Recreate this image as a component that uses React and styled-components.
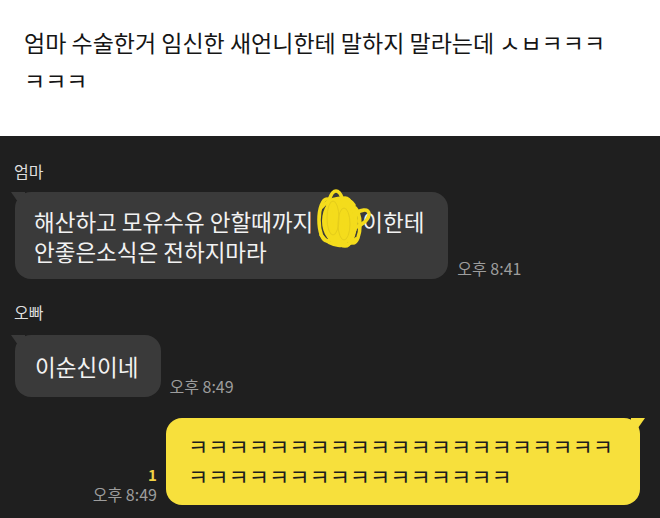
import styled, { createGlobalStyle } from "styled-components";

const GlobalStyle = createGlobalStyle`
    html, body {
        margin: 0;
        padding: 0;
        background: #1f1f1f;
    }
    body {
        font-family: "Noto Sans CJK KR", "Noto Sans", sans-serif;
        width: 660px;
        height: 518px;
        overflow: hidden;
    }
`;

const Page = styled.div`
    display: flex;
    flex-direction: column;
    width: 660px;
    height: 518px;
`;

const Caption = styled.div`
    background: #ffffff;
    height: 136px;
    box-sizing: border-box;
    padding: 23px 20px 0 24px;
    font-size: 23px;
    line-height: 38px;
    color: #151515;
`;

const Chat = styled.div`
    flex: 1;
    background: #1f1f1f;
    display: flex;
    flex-direction: column;
    padding: 26px 20px 0 15px;
`;

const Group = styled.div`
    display: flex;
    flex-direction: column;
    align-items: flex-start;
    margin-bottom: ${props => props.gap || 0}px;
`;

const Name = styled.div`
    font-size: 16px;
    line-height: 18px;
    color: #dedede;
    margin-left: -1px;
    margin-bottom: ${props => props.gap}px;
`;

const Row = styled.div`
    display: flex;
    align-items: flex-end;
    justify-content: ${props => props.mine ? "flex-end" : "flex-start"};
    gap: 9px;
`;

const Bubble = styled.div`
    position: relative;
    background: ${props => props.mine ? "#f7e03c" : "#3a3a3a"};
    color: ${props => props.mine ? "#1c1c1c" : "#f2f2f2"};
    border-radius: 16px;
    font-size: ${props => props.mine ? 22 : 22.5}px;
    line-height: 30px;
    padding: ${props => props.pad};
    white-space: nowrap;

    &::before {
        content: "";
        position: absolute;
        top: 0;
        ${props => props.mine ? "right: -5px;" : "left: -4px;"}
        width: 14px;
        height: 12px;
        background: inherit;
        clip-path: ${props => props.mine
            ? "polygon(0 0, 100% 0, 40% 100%, 0 100%)"
            : "polygon(0 0, 100% 0, 100% 100%, 60% 100%)"};
    }
`;

const Meta = styled.div`
    display: flex;
    flex-direction: column;
    align-items: ${props => props.mine ? "flex-end" : "flex-start"};
    padding-bottom: 1px;
`;

const Unread = styled.span`
    font-size: 15px;
    font-weight: bold;
    line-height: 20px;
    color: #f2d346;
`;

const Time = styled.span`
    font-size: 16px;
    line-height: 19px;
    color: #9d9d9d;
    white-space: nowrap;
`;

const Hidden = styled.span`
    position: relative;
    display: inline-block;
    width: 44px;
    height: 20px;
    vertical-align: middle;
`;

const Scribble = styled.svg`
    position: absolute;
    left: -2px;
    top: -28px;
    width: 56px;
    height: 64px;
    overflow: visible;
`;

function Scrawl() {
    return (
        <Hidden>
            <Scribble viewBox="0 0 56 64">
                <ellipse cx="24" cy="34" rx="18" ry="24" fill="#f4dc1c" />
                <g fill="none" stroke="#f4dc1c" strokeWidth="3.6" strokeLinecap="round">
                    <ellipse cx="11" cy="33" rx="8" ry="21" />
                    <ellipse cx="20" cy="30" rx="9" ry="26" />
                    <ellipse cx="29" cy="35" rx="10" ry="24" />
                    <ellipse cx="37" cy="38" rx="7" ry="18" />
                    <path d="M34 31 C44 21 54 21 53 28 C52 34 44 39 38 41" />
                    <path d="M6 20 C14 10 30 8 38 18" />
                    <path d="M5 48 C14 60 30 62 40 52" />
                </g>
                <g fill="none" stroke="#d9c11a" strokeWidth="1" opacity="0.55">
                    <ellipse cx="17" cy="31" rx="6" ry="17" />
                    <ellipse cx="28" cy="37" rx="6" ry="16" />
                </g>
            </Scribble>
        </Hidden>
    );
}

export default function App() {
    return (
        <Page>
            <GlobalStyle />
            <Caption>
                엄마 수술한거 임신한 새언니한테 말하지 말라는데 ㅅㅂㅋㅋㅋ
                <br />
                ㅋㅋㅋ
            </Caption>
            <Chat>
                <Group gap={24}>
                    <Name gap={12}>엄마</Name>
                    <Row>
                        <Bubble pad="14px 24px 13px 19px">
                            해산하고 모유수유 안할때까지 <Scrawl />이한테
                            <br />
                            안좋은소식은 전하지마라
                        </Bubble>
                        <Meta>
                            <Time>오후 8:41</Time>
                        </Meta>
                    </Row>
                </Group>
                <Group gap={21}>
                    <Name gap={14}>오빠</Name>
                    <Row>
                        <Bubble pad="16px 22px 16px 20px">이순신이네</Bubble>
                        <Meta>
                            <Time>오후 8:49</Time>
                        </Meta>
                    </Row>
                </Group>
                <Row mine>
                    <Meta mine>
                        <Unread>1</Unread>
                        <Time>오후 8:49</Time>
                    </Meta>
                    <Bubble mine pad="12px 27px 15px 22px">
                        ㅋㅋㅋㅋㅋㅋㅋㅋㅋㅋㅋㅋㅋㅋㅋㅋㅋㅋㅋㅋㅋ
                        <br />
                        ㅋㅋㅋㅋㅋㅋㅋㅋㅋㅋㅋㅋㅋㅋㅋㅋ
                    </Bubble>
                </Row>
            </Chat>
        </Page>
    );
}
